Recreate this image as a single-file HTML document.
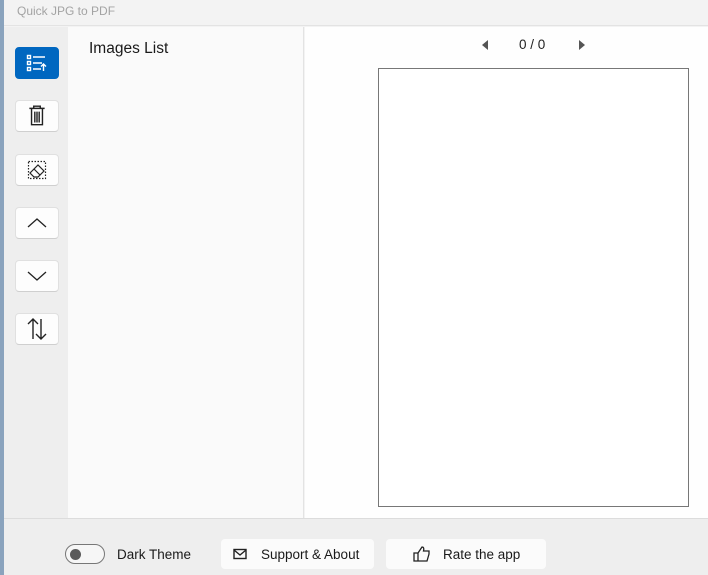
<!DOCTYPE html>
<html><head><style>
*{margin:0;padding:0;box-sizing:border-box}
body{width:708px;height:575px;position:relative;overflow:hidden;font-family:"Segoe UI","Liberation Sans",sans-serif;background:#f3f3f3}
.a{position:absolute}
.btn{position:absolute;left:15px;width:44px;height:32px;background:#fdfdfd;border:1px solid #e0e0e0;border-bottom-color:#cfcfcf;border-radius:4px;display:flex;align-items:center;justify-content:center}
.fb{position:absolute;top:539px;height:30px;background:#fbfbfb;border-radius:4px;font-size:13.5px;color:#1a1a1a;display:flex;align-items:center}
</style></head><body>
<div class="a" style="left:0;top:0;width:4px;height:575px;background:#8aa3bd"></div>
<div class="a" style="left:4px;top:0;width:704px;height:26px;background:#f3f3f3;border-bottom:1px solid #e3e3e3"></div>
<div class="a" style="left:17px;top:4px;font-size:12px;color:#a3a3a3">Quick JPG to PDF</div>
<div class="a" style="left:4px;top:27px;width:64px;height:491px;background:#eeeeee"></div>
<div class="a" style="left:68px;top:27px;width:236px;height:491px;background:#fafafa;border-right:1px solid #e3e3e3"></div>
<div class="a" style="left:305px;top:27px;width:403px;height:491px;background:#fefefe"></div>
<div class="a" style="left:89px;top:40px;font-size:15.5px;color:#1a1a1a">Images List</div>
<div class="a" style="left:378px;top:68px;width:311px;height:439px;background:#fff;border:1px solid #777"></div>
<div class="a" style="left:482px;top:40px;width:0;height:0;border-top:5px solid transparent;border-bottom:5px solid transparent;border-right:6px solid #555"></div>
<div class="a" style="left:579px;top:40px;width:0;height:0;border-top:5px solid transparent;border-bottom:5px solid transparent;border-left:6px solid #555"></div>
<div class="a" style="left:519px;top:37px;font-size:13.5px;color:#222">0 / 0</div>
<div class="btn" style="top:47px;background:#0067c0;border-color:#0067c0"><svg width="22" height="20" viewBox="0 0 22 20" fill="none" stroke="#fff" stroke-width="1.4"><rect x="1.5" y="2.5" width="3" height="3"/><rect x="1.5" y="8.5" width="3" height="3"/><rect x="1.5" y="14.5" width="3" height="3"/><path d="M7 4h12M7 10h9M7 16h8M17.5 18V11M15 13.5l2.5-2.5 2.5 2.5"/></svg></div>
<div class="btn" style="top:100px"><svg width="22" height="24" viewBox="0 0 20 22" fill="none" stroke="#222" stroke-width="1.3"><path d="M3 4h14M7 4V2h6v2M5 4v15h10V4M8 7v10M10 7v10M12 7v10"/></svg></div>
<div class="btn" style="top:154px"><svg width="22" height="22" viewBox="0 0 22 22" fill="none" stroke="#222" stroke-width="1.2"><rect x="2.5" y="2.5" width="17" height="17" stroke-dasharray="1.5 1.5"/><path d="M4 14l8-8 6 6-6 6H8zM8 10l6 6"/></svg></div>
<div class="btn" style="top:207px"><svg width="22" height="14" viewBox="0 0 22 14" fill="none" stroke="#222" stroke-width="1.3"><path d="M2 11L11 3l9 8"/></svg></div>
<div class="btn" style="top:260px"><svg width="22" height="14" viewBox="0 0 22 14" fill="none" stroke="#222" stroke-width="1.3"><path d="M2 3l9 8 9-8"/></svg></div>
<div class="btn" style="top:313px"><svg width="22" height="24" viewBox="0 0 22 24" fill="none" stroke="#222" stroke-width="1.4"><path d="M7 22V2M2 7l5-5 5 5M15 2v20M10 17l5 5 5-5"/></svg></div>
<div class="a" style="left:4px;top:518px;width:704px;height:57px;background:#eeeeee;border-top:1px solid #dcdcdc"></div>
<div class="a" style="left:65px;top:544px;width:40px;height:20px;border:1px solid #777;border-radius:10px;background:#f6f6f6"></div>
<div class="a" style="left:70px;top:549px;width:11px;height:11px;border-radius:50%;background:#5a5a5a"></div>
<div class="a" style="left:117px;top:547px;font-size:13.5px;color:#1a1a1a">Dark Theme</div>
<div class="fb" style="left:221px;width:153px"><svg style="margin-left:12px" width="14" height="12" viewBox="0 0 14 12" fill="none" stroke="#222" stroke-width="1.4"><rect x="1" y="1.5" width="12" height="9"/><path d="M1 2l6 5 6-5"/></svg><span style="margin-left:14px">Support &amp; About</span></div>
<div class="fb" style="left:386px;width:160px"><svg style="margin-left:27px" width="18" height="16" viewBox="0 0 18 16" fill="none" stroke="#222" stroke-width="1.3"><path d="M1 7h4v8H1zM5 7l4-6c2 0 2 2 1.5 4H16v3l-2 7H5"/></svg><span style="margin-left:12px">Rate the app</span></div>
</body></html>
